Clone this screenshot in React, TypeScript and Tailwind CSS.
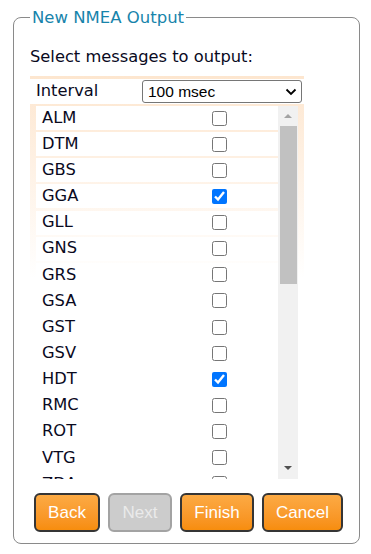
import React from "react"

const messages = [
    { id: "ALM", on: false },
    { id: "DTM", on: false },
    { id: "GBS", on: false },
    { id: "GGA", on: true },
    { id: "GLL", on: false },
    { id: "GNS", on: false },
    { id: "GRS", on: false },
    { id: "GSA", on: false },
    { id: "GST", on: false },
    { id: "GSV", on: false },
    { id: "HDT", on: true },
    { id: "RMC", on: false },
    { id: "ROT", on: false },
    { id: "VTG", on: false },
    { id: "ZDA", on: false },
]

function Scrollbar() {
    return (
        <div className="relative w-[20px] shrink-0 bg-[#f1f1f1]">
            <div className="absolute left-[6px] top-[8px] w-0 h-0 border-l-[4px] border-r-[4px] border-b-[4px] border-l-transparent border-r-transparent border-b-[#a3a3a3]"></div>
            <div className="absolute left-[2px] top-[20px] w-[17px] h-[158px] bg-[#c1c1c1]"></div>
            <div className="absolute left-[6px] bottom-[9px] w-0 h-0 border-l-[4px] border-r-[4px] border-t-[4px] border-l-transparent border-r-transparent border-t-[#505050]"></div>
        </div>
    )
}

function Btn({ label, w, disabled }: { label: string; w: string; disabled?: boolean }) {
    return (
        <button
            className={
                disabled
                    ? `${w} h-[39px] rounded-[6px] border-2 border-[#a3a3a3] bg-[#cccccc] text-[#eaeaea] text-[17px]`
                    : `${w} h-[39px] rounded-[6px] border-2 border-[#353535] bg-gradient-to-b from-[#fcaa43] to-[#f78d0c] text-white text-[17px]`
            }
            style={{ fontFamily: "'Liberation Sans', Arial, sans-serif" }}
        >
            {label}
        </button>
    )
}

export default function App() {
    return (
        <div className="w-[371px] h-[554px] bg-white overflow-hidden font-['DejaVu_Sans',sans-serif] text-[16.3px] text-[#0a0a1e]">
            <fieldset className="mx-[13px] mt-[7px] h-[537px] border border-[#8a8a8a] rounded-[8px] px-[16px]">
                <legend className="px-[2px] text-[16.5px] leading-[21px] text-[#1784ab]">New NMEA Output</legend>

                <div className="mt-[19px] leading-[20px]">Select messages to output:</div>

                <div className="mt-[9px] w-[274px] h-[404px] pt-[3px] px-[6px] bg-gradient-to-b from-[#fde6cf] via-white to-white">
                    <div className="-mx-[6px] pl-[6px] pr-[2px] h-[25px] flex items-center bg-white">
                        <span className="w-[106px]">Interval</span>
                        <div className="w-[160px] h-[23px] border border-[#767676] rounded-[3px] flex items-center justify-between pl-[5px] pr-[4px] text-black text-[15.5px]" style={{ fontFamily: "'Liberation Sans', Arial, sans-serif" }}>
                            <span>100 msec</span>
                            <svg width="12" height="8" viewBox="0 0 12 8">
                                <path d="M1.5 1.5 L6 6 L10.5 1.5" fill="none" stroke="#000" strokeWidth="1.8" />
                            </svg>
                        </div>
                    </div>
                    <div className="mt-[2px] flex h-[373px] overflow-hidden">
                        <div className="flex-1 flex flex-col gap-[2.15px]">
                            {messages.map(m => (
                                <div key={m.id} className="h-[24px] shrink-0 bg-white flex items-center">
                                    <span className="w-[176px] pl-[6px]">{m.id}</span>
                                    <input type="checkbox" defaultChecked={m.on} className="w-[15px] h-[15px] m-0" />
                                </div>
                            ))}
                        </div>
                        <Scrollbar />
                    </div>
                </div>

                <div className="mt-[13px] ml-[4px] flex gap-[8px]">
                    <Btn label="Back" w="w-[66px]" />
                    <Btn label="Next" w="w-[64px]" disabled />
                    <Btn label="Finish" w="w-[74px]" />
                    <Btn label="Cancel" w="w-[81px]" />
                </div>
            </fieldset>
        </div>
    )
}
